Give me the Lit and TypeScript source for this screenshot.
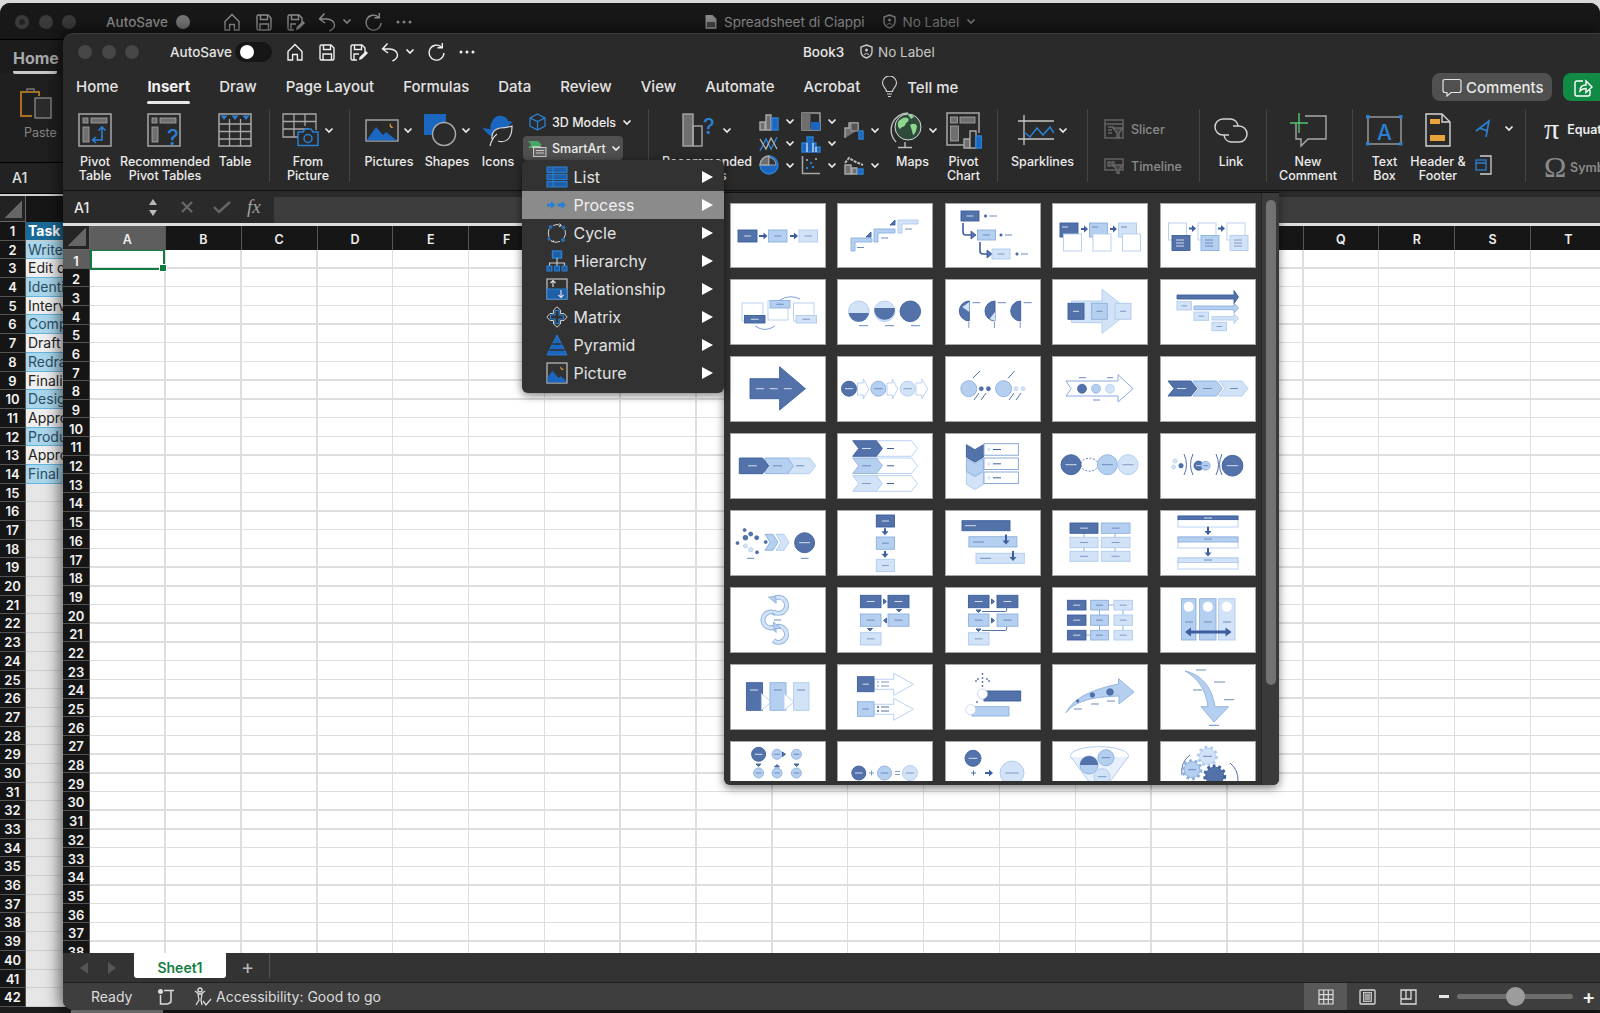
import { LitElement, html, css, svg, nothing } from 'lit';
import { customElement } from 'lit/decorators.js';

// ---------- small svg helpers ----------
const ic = (w: number, h: number, body: unknown) =>
  html`<svg class="ic" width=${w} height=${h} viewBox="0 0 ${w} ${h}" fill="none" stroke="currentColor" stroke-width="1.4">${body}</svg>`;

const chev = () => html`<svg class="chev" width="10" height="7" viewBox="0 0 10 7" fill="none" stroke="currentColor" stroke-width="1.7"><path d="M1.5 1.5 5 5l3.5-3.5"/></svg>`;

const BLUE = '#2a80d2';
const BLUE2 = '#1a66c0';
const GR = '#a8a8a8';
const GF = '#6f6f6f';

// ---------- title bar icons ----------
const home = ic(20, 20, svg`<path d="M3 9.5 10 2.5l7 7V18h-4.6v-5.5H7.6V18H3z"/>`);
const save = ic(20, 20, svg`<path d="M3 4.5Q3 3 4.5 3H14l3 3v10.5q0 1.5-1.5 1.5h-11Q3 18 3 16.5z"/><path d="M6.5 3v4.5h7V3M6 18v-6h8.500v6"/>`);
const saveAs = ic(20, 20, svg`<path d="M3 4.5Q3 3 4.5 3H14l3 3v5M9 18H4.5Q3 18 3 16.5V4.5"/><path d="M6.5 3v4.5h7V3M6 18v-6h5"/><path d="m11 18 .6-3L18 9l2 2-6 6z" fill="currentColor" stroke="none"/>`);
const undo = ic(20, 20, svg`<path d="M7.5 1.5 2.5 7l5.5 4M3 7h6.5c5 0 8 3 8 6 0 2.5-2 4.5-5 6"/>`);
const redo = ic(20, 20, svg`<path d="M15.5 5A7.5 7.5 0 1 0 18 11"/><path d="M16.3 1v4.8h-4.8"/>`);
const more = ic(20, 20, svg`<g fill="currentColor" stroke="none"><circle cx="4" cy="10" r="1.5"/><circle cx="10" cy="10" r="1.5"/><circle cx="16" cy="10" r="1.5"/></g>`);
const shield = ic(13, 15, svg`<path d="M6.5 1 12 3v4.5C12 11 9.5 13 6.5 14 3.5 13 1 11 1 7.5V3z"/><circle cx="6.5" cy="6" r="1.5" fill="currentColor" stroke="none"/><path d="M4 10.5q2.5-2 5 0" stroke-width="1"/>`);
const sheetDoc = ic(14, 16, svg`<path d="M1.5 1h7L12.5 5v10h-11z" fill="#8a8a8a" stroke="none"/><path d="M3 8h8v5H3z" fill="#444" stroke="none"/>`);

// ---------- ribbon icons ----------
const pivotBase = svg`<rect x="1" y="1" width="32" height="32" stroke=${GR} stroke-width="1.5"/><rect x="5" y="5" width="5" height="5" fill=${GF} stroke=${GR} stroke-width=".8"/><rect x="13" y="5" width="16" height="5" fill=${GF} stroke=${GR} stroke-width=".8"/><rect x="5" y="14" width="6" height="15" fill=${GF} stroke=${GR} stroke-width=".8"/>`;
const pivotTable = ic(34, 34, svg`${pivotBase}<path d="M15 27h9V14M20.5 17.5 24 14l3.5 3.5M18 24l-3.5 3 3.5 3" stroke=${BLUE} stroke-width="1.6"/>`);
const recPivot = ic(36, 34, svg`${pivotBase}<text x="20" y="32" font-family="Inter,sans-serif" font-size="22" fill=${BLUE} stroke="none">?</text>`);
const tableIc = ic(34, 34, svg`<rect x="1" y="1" width="32" height="32" stroke=${GR} stroke-width="1.5"/><path d="M1 11h32M1 18.5h32M1 26h32M11.5 6v27M22.5 6v27" stroke=${GR} stroke-width="1.3"/><path d="M2.5 2.5h7L6 7zM13.5 2.5h7L17 7zM24.5 2.5h7L28 7z" fill=${BLUE} stroke="none"/>`);
const fromPic = ic(38, 34, svg`<path d="M20 24H1V1h33v16M1 8.5h33M1 16h26M12 1v23M23 1v12" stroke=${GR} stroke-width="1.3"/><path d="M16 32.5V19h5l2-3h6l2 3h5v13.5z" fill="#2a2a2a" stroke=${BLUE} stroke-width="1.5"/><circle cx="26" cy="25.5" r="4" stroke=${BLUE} stroke-width="1.5"/>`);
const pictures = ic(34, 23, svg`<rect x="1" y="1" width="32" height="21" stroke=${GR} stroke-width="1.4"/><path d="M1.5 21.5 11 8l7 8 3-3 11 8.5z" fill=${BLUE2} stroke="none"/><path d="M25.5 4a3 3 0 0 0 1 5 3 3 0 0 0 2-1q-3 0-3-4z" fill="#e8a33d" stroke="none"/>`);
const shapes = ic(34, 34, svg`<rect x="1" y="1" width="22" height="21" fill=${BLUE2} stroke="none"/><circle cx="21" cy="21" r="11.5" fill="#2a2a2a" stroke=${GR} stroke-width="1.5"/>`);
const iconsIc = ic(34, 34, svg`<path d="M1 14q3 2 9 2-2-3 2-9 3-5 9-4 5 1 6 5l5 1-4 3v4q0 8-8 8-11 1-15-5-3-3-4-5z" fill=${BLUE2} stroke="none"/><path d="M9 33q2-8 7-12M11 26q-1-9 8-11 6 0 12-2 0 8-3 12-4 5-11 3" fill="#2a2a2a" stroke="#d8d8d8" stroke-width="1.2"/>`);
const cube = ic(17, 18, svg`<path d="M8.5 1 16 4.8v8.400L8.5 17 1 13.200V4.800zM1 4.800l7.5 3.700L16 4.800M8.5 8.500V17" stroke=${BLUE} stroke-width="1.3"/>`);
const smart = ic(20, 17, svg`<path d="M1 1h10l3.500 3.500L11 8H1l3-3.500z" fill="#4aa564" stroke="none"/><path d="M5 7h9" stroke="#b9e2c2"/><rect x="6.500" y="7.500" width="12.500" height="9" fill="#666" stroke="#c9c9c9" stroke-width="1"/><path d="M9 10.500h8M9 13h8" stroke="#ddd" stroke-width=".8"/>`);
const recChart = ic(36, 34, svg`<rect x="1" y="1" width="10" height="32" fill=${GF} stroke=${GR} stroke-width="1.4"/><rect x="11" y="13" width="9" height="20" stroke=${GR} stroke-width="1.4"/><text x="21" y="21" font-family="Inter,sans-serif" font-size="22" fill=${BLUE} stroke="none">?</text>`);
const cBars = ic(20, 18, svg`<path d="M1 17V9h5v8zM7 17V2h5v15z" stroke=${GR} fill=${GF}/><path d="M13 17V5h6v12z" fill=${BLUE2} stroke=${BLUE}/>`);
const cStack = ic(20, 19, svg`<rect x="1" y="1" width="18" height="17" stroke=${GR}/><rect x="1" y="1" width="8.500" height="17" fill=${GF} stroke="none"/><rect x="10" y="10" width="9" height="8" fill=${BLUE2} stroke="none"/>`);
const cLine = ic(20, 18, svg`<path d="M1 16 7 4l5 10 6-12" stroke=${BLUE} stroke-width="1.5"/><path d="M1 4l6 10 5-11 6 11" stroke="#b0b0b0"/>`);
const cColumn = ic(20, 18, svg`<path d="M1 17V8h5V2h6v6h3v4h4v5z" fill=${BLUE2} stroke=${BLUE}/><path d="M6 8v9M12 8v9M15 12v5" stroke="#cde"/>`);
const cPie = ic(20, 20, svg`<circle cx="10" cy="10" r="9" fill=${BLUE2} stroke=${BLUE}/><path d="M10 10V1a9 9 0 0 0-9 9z" fill=${GF} stroke=${GR}/><path d="M10 2.500a7.500 7.500 0 0 1 7 7.500h-7z" fill="#333" stroke=${GR} stroke-width=".9"/>`);
const cScatter = ic(20, 20, svg`<path d="M1.500 1v17.500H19" stroke=${GR} stroke-width="1.5"/><g fill=${BLUE} stroke="none"><circle cx="6" cy="13" r="1.2"/><circle cx="10" cy="8" r="1.2"/><circle cx="12" cy="12" r="1.2"/></g><g fill="#bbb" stroke="none"><circle cx="6" cy="5" r="1"/><circle cx="15" cy="4" r="1"/></g>`);
const cWaterfall = ic(20, 20, svg`<path d="M1 18V8h4V3h9v7" stroke=${GR} fill=${GF}/><path d="M7 3h7v8H7z" fill="#555" stroke=${GR} stroke-width=".9"/><path d="M15 11h4v8h-4z" fill=${BLUE2} stroke=${BLUE}/>`);
const cHier = ic(20, 20, svg`<path d="M1 8 5 3l7 4 7 3" stroke="#bbb" stroke-width="2" stroke-dasharray="3 1"/><path d="M1 19V10h6v9zM8 19v-6h5v6z" fill=${GF} stroke=${GR}/><path d="M14 14h5v5h-5z" fill=${BLUE2} stroke=${BLUE}/>`);
const globe = ic(36, 38, svg`<path d="M8 31A17 17 0 0 1 20 2" stroke="#bdbdbd" stroke-width="1.4"/><circle cx="20" cy="16" r="13" fill="#2d4a3a" stroke="#d9d9d9" stroke-width="1"/><path d="M10 11q5-6 10-4 2 3-2 5-1 4-4 4l-2 2q-3-2-2-7zM22 14q5-3 7 1-1 8-4 9-1-5-3-10zM20 4q4-1 6 2l-3 2z" fill="#8fd68f" stroke="none"/><path d="M17 31v5M10 36.500h14" stroke="#bdbdbd"/>`);
const pivotChart = ic(36, 37, svg`<path d="M20 33H1V1h32v20" stroke=${GR} stroke-width="1.5"/><rect x="4.500" y="5" width="7" height="6" fill=${GF} stroke=${GR} stroke-width=".8"/><rect x="14" y="5" width="15" height="6" fill=${GF} stroke=${GR} stroke-width=".8"/><rect x="4.500" y="14" width="8" height="15" fill=${GF} stroke=${GR} stroke-width=".8"/><path d="M18 36V27h6v9z" fill=${GF} stroke=${GR}/><path d="M24 36V19h6v17z" fill="#2a2a2a" stroke=${GR}/><path d="M30 36V24h5.500v12z" fill=${BLUE2} stroke=${BLUE}/>`);
const spark = ic(36, 30, svg`<path d="M0 6h36M0 24h36M6 0v30" stroke="#c9c9c9" stroke-width="1.3"/><path d="M6 17l6 5 7-9 6 7 7-8 4 6" stroke=${BLUE} stroke-width="1.5"/>`);
const slicer = ic(20, 20, svg`<g stroke="#666"><rect x="1" y="1" width="18" height="18"/><path d="M1 5h18"/><path d="M4 8h6M4 11h4M4 14h4"/><path d="M9 9h10l-4 5v5l-2-1v-4z" fill="#444"/></g>`);
const timeline = ic(20, 16, svg`<g stroke="#666"><rect x="1" y="1" width="18" height="11"/><path d="M4 4h2v4H4zM8 4h2v4H8z"/><path d="M9 7h10l-4 5v4l-2-1v-3z" fill="#444"/></g>`);
const link = ic(34, 25, svg`<g stroke="#d2d2d2" stroke-width="1.5"><path d="M15 17H9a8 8 0 0 1 0-16h8a8 8 0 0 1 7 7"/><path d="M19 8h6a8 8 0 0 1 0 16h-8a8 8 0 0 1-7-7"/></g>`);
const newComment = ic(37, 35, svg`<path d="M6 10v16h5v7l7-7h18V3H15" stroke=${GR} stroke-width="1.4"/><path d="M9 0v20M0 10h18" stroke="#54c76d" stroke-width="1.4"/>`);
const textBox = ic(37, 31, svg`<rect x="2" y="2" width="33" height="27" stroke="#a8a8a8" stroke-width="1.3"/><text x="18.500" y="25" font-family="Inter,sans-serif" font-size="21" text-anchor="middle" fill=${BLUE} stroke="none">A</text><g fill=${BLUE} stroke="none"><rect x="0" y="0" width="3.500" height="3.500"/><rect x="33" y="0" width="3.500" height="3.500"/><rect x="0" y="27" width="3.500" height="3.500"/><rect x="33" y="27" width="3.500" height="3.500"/></g>`);
const headFoot = ic(26, 34, svg`<path d="M1 1h16l8 8v24H1z" stroke="#d5d5d5" stroke-width="1.4"/><path d="M17 1v8h8" stroke="#d5d5d5"/><rect x="5" y="6" width="10" height="5" fill="#e8a33d" stroke="none"/><rect x="5" y="22" width="15" height="6" fill="#e8a33d" stroke="none"/>`);
const wordArt = ic(17, 19, svg`<path d="M1 12 14 2 11 18M4 9l9 3" stroke=${BLUE} stroke-width="1.7"/>`);
const objBox = ic(17, 20, svg`<path d="M5 1h11v18H5" stroke="#d0d0d0" stroke-width="1.3"/><rect x="1" y="5" width="10" height="10" fill="#2a2a2a" stroke=${BLUE} stroke-width="1.3"/><path d="M1 8h10" stroke=${BLUE}/>`);

// ---------- menu icons ----------
const mFrame = (b: unknown) => ic(22, 22, b);
const M_ICONS = {
  List: mFrame(svg`<g stroke=${BLUE} stroke-width="1.1"><rect x="1" y="1" width="20" height="5.300" fill="#1f5fa8"/><rect x="1" y="8.300" width="20" height="5.300" fill="#1f5fa8"/><rect x="1" y="15.600" width="20" height="5.300" fill="#1f5fa8"/><path d="M7 1v20"/></g>`),
  Process: mFrame(svg`<g fill=${BLUE} stroke="none"><path d="M1 9.500h4V7l4.500 4L5 15v-2.500H1z"/><path d="M11.500 9.500h4V7l4.500 4-4.500 4v-2.500h-4z"/></g>`),
  Cycle: mFrame(svg`<g stroke="#d0d0d0" stroke-width="1"><path d="M7 3.500Q11 1.500 15 3.500M19 8q1.500 4-1 8M14 19.500q-4 1.500-8 0M3 15q-1.500-4 0-8"/><path d="M13.500 1.500 15.500 3.500 13 5M5 18l1 1.800 2-1.500"/></g><g fill="#1f5fa8" stroke=${BLUE} stroke-width=".9"><circle cx="4.500" cy="5" r="1.500"/><circle cx="17.500" cy="5.500" r="1.500"/><circle cx="17" cy="18" r="1.500"/><circle cx="3" cy="17" r="1.200"/></g>`),
  Hierarchy: mFrame(svg`<rect x="6.500" y="1" width="9" height="7" fill="#1f5fa8" stroke=${BLUE}/><path d="M11 8v5M3.500 16v-3h15v3M11 13v3" stroke="#cfcfcf" stroke-width="1.1"/><g fill="#1f5fa8" stroke=${BLUE} stroke-width="1"><rect x="1" y="16" width="5" height="5"/><rect x="8.500" y="16" width="5" height="5"/><rect x="16" y="16" width="5" height="5"/></g>`),
  Relationship: mFrame(svg`<rect x="1" y="1" width="20" height="20" stroke="#cfcfcf" stroke-width="1.1"/><rect x="1" y="11" width="20" height="10" fill="#1f5fa8" stroke=${BLUE} stroke-width="1"/><path d="M7 9V3M4.500 5 7 2.500 9.500 5M15 12v7M12.500 17l2.500 2.500 2.500-2.500" stroke="#e6e6e6" stroke-width="1.1"/>`),
  Matrix: mFrame(svg`<path d="M11 .8 14.500 4v3.500H18l3.200 3.500L18 14.500h-3.500V18L11 21.200 7.500 18v-3.500H4L.8 11 4 7.500h3.500V4z" stroke="#cfcfcf" stroke-width="1"/><path d="M9 4.500h4V9h4.500v4H13v4.500H9V13H4.500V9H9z" stroke=${BLUE} stroke-width="1.2"/>`),
  Pyramid: mFrame(svg`<path d="M11 1 21 21H1z" fill=${BLUE2} stroke=${BLUE} stroke-width=".9"/><path d="M6.500 10h9M3.500 16h15" stroke="#2f2f2f" stroke-width="1.5"/>`),
  Picture: mFrame(svg`<rect x="1" y="1" width="20" height="20" stroke="#cfcfcf" stroke-width="1.1"/><path d="M1.500 20.500V15l5-6 6 7 2-2 6 5v1.500z" fill=${BLUE2} stroke="none"/><path d="M15 4a2.500 2.500 0 0 0 1 4 2.500 2.500 0 0 0 2-1q-3 0-3-3z" fill="#e8a33d" stroke="none"/>`),
} as Record<string, unknown>;

// ---------- gallery thumbnails ----------
const K: Record<string, [string, string, string]> = {
  d: ['#5372a9', '#3c5e9f', '#d6dfef'],
  m: ['#b4cff0', '#8db0de', '#6d8bbd'],
  l: ['#d3e3f7', '#afcbef', '#7f9ac6'],
  w: ['#ffffff', '#b3cdef', '#7f9ac6'],
  v: ['#ffffff', '#7fa0d6', '#3c5e9f'],
};
const SW = 0.9;
const r = (x: number, y: number, w: number, h: number, k: string) =>
  svg`<rect x=${x} y=${y} width=${w} height=${h} fill=${K[k][0]} stroke=${K[k][1]} stroke-width=${SW}/>`;
const c = (cx: number, cy: number, rad: number, k: string) =>
  svg`<circle cx=${cx} cy=${cy} r=${rad} fill=${K[k][0]} stroke=${K[k][1]} stroke-width=${SW}/>`;
const p = (d: string, k: string) => svg`<path d=${d} fill=${K[k][0]} stroke=${K[k][1]} stroke-width=${SW}/>`;
const ln = (x1: number, x2: number, y: number, k = 'm') =>
  svg`<path d="M${x1} ${y}H${x2}" stroke=${K[k][2]} stroke-width="1"/>`;
const st = (d: string, col = '#3c5e9f', w = 1) => svg`<path d=${d} stroke=${col} stroke-width=${w} fill="none"/>`;
const rd = (x: number, y: number, w: number, h: number, k: string) => {
  const l = Math.min(w * 0.38, 8);
  return svg`${r(x, y, w, h, k)}${ln(x + w / 2 - l / 2, x + w / 2 + l / 2, y + h / 2, k)}`;
};
const cd = (cx: number, cy: number, rad: number, k: string) =>
  svg`${c(cx, cy, rad, k)}${ln(cx - rad * 0.55, cx + rad * 0.55, cy, k)}`;
const ar = (x1: number, x2: number, y: number) =>
  svg`<path d="M${x1} ${y - 1}H${x2 - 4}V${y - 3.5}L${x2} ${y}L${x2 - 4} ${y + 3.5}V${y + 1}H${x1}z" fill="#3c5e9f"/>`;
const ad = (x: number, y1: number, y2: number) =>
  svg`<path d="M${x - 1} ${y1}V${y2 - 4}H${x - 3.5}L${x} ${y2}L${x + 3.5} ${y2 - 4}H${x + 1}V${y1}z" fill="#3c5e9f"/>`;
const chv = (x: number, y: number, w: number, h: number, n: number, k: string) =>
  p(`M${x} ${y}H${x + w - n}L${x + w} ${y + h / 2}L${x + w - n} ${y + h}H${x}L${x + n} ${y + h / 2}z`, k);
const pen = (x: number, y: number, w: number, h: number, n: number, k: string) =>
  p(`M${x} ${y}H${x + w - n}L${x + w} ${y + h / 2}L${x + w - n} ${y + h}H${x}z`, k);
const house = (x: number, y: number, w: number, h: number, body: number, k: string) =>
  p(`M${x} ${y + body}H${x + w * 0.5}V${y}L${x + w} ${y + h / 2}L${x + w * 0.5} ${y + h}V${y + h - body}H${x}z`, k);
const dot = (x: number, y: number, rad: number, k = 'd') =>
  svg`<circle cx=${x} cy=${y} r=${rad} fill=${k === 'w' ? '#fff' : K[k][0]} stroke=${K[k][1]} stroke-width=".7"/>`;
const gear = (x: number, y: number, rad: number, k: string) =>
  svg`<circle cx=${x} cy=${y} r=${rad + 1} fill="none" stroke=${K[k][1]} stroke-width="3" stroke-dasharray="2.8 2.8"/>${c(x, y, rad, k)}`;
// round arrow: ring with a gap and a head at one end of the gap
const ring = (x: number, y: number, rot: number) =>
  svg`<g transform="rotate(${rot} ${x} ${y})"><circle cx=${x} cy=${y} r="8" fill="none" stroke="#8db0de" stroke-width="5" stroke-dasharray="36 14.3"/><circle cx=${x} cy=${y} r="8" fill="none" stroke="#d3e3f7" stroke-width="3.2" stroke-dasharray="36 14.3"/><path d="M${x} ${y + 3}v10l-5-5z" fill="#b4cff0" stroke="#8db0de" stroke-width=".8" transform="rotate(-102 ${x} ${y})"/></g>`;

const THUMBS = [
  // row 1
  svg`${rd(8, 27, 19, 12, 'd')}${ar(29, 37.5, 33)}${rd(38.5, 27, 18.5, 12, 'm')}${ar(60, 68, 33)}${rd(69, 27, 18.5, 12, 'l')}`,
  svg`${p('M14 35h21v4H18v9h-4z', 'm')}${p('M37 26h21v4H41v9h-4z', 'm')}${p('M61 17h20v4H65v9h-4z', 'l')}${p('M29 34l5-5v5z', 'd')}${p('M53 22l5-5v5z', 'd')}${ln(20, 27, 44.5)}${ln(44, 51, 35)}${ln(68, 75, 26)}`,
  svg`${rd(16, 8, 18, 10, 'd')}${dot(40.5, 13, 1.2)}${ln(44.5, 52, 13)}${st('M18 20v9q0 3 3 3h5', '#3c5e9f', 1.6)}${p('M26 28l5 4-5 4z', 'd')}${rd(32.5, 27, 18, 10, 'm')}${dot(56, 32, 1.2)}${ln(60, 67, 32)}${st('M35 39v9q0 3 3 3h4', '#3c5e9f', 1.6)}${p('M42 47l5 4-5 4z', 'd')}${rd(47, 46, 18, 10, 'l')}${dot(72, 51, 1.2)}${ln(76, 83, 51)}`,
  svg`${r(8, 20, 18, 14, 'd')}${ln(10, 16, 24, 'd')}${r(11.5, 31, 18, 17, 'w')}${ar(29, 36, 26)}${r(37.5, 20, 18, 14, 'm')}${ln(40, 46, 24)}${r(41, 31, 18, 17, 'w')}${ar(58, 65, 26)}${r(66.5, 20, 18, 14, 'l')}${ln(69, 75, 24)}${r(70.5, 31, 18, 17, 'w')}`,
  svg`${r(8.5, 20, 18, 17, 'w')}${r(12, 32.5, 18, 15, 'd')}${st('M16 37h8M16 40h8M16 43h8', '#d6dfef')}${ar(29, 36, 25.5)}${r(38, 20, 18, 17, 'w')}${r(41, 32.5, 18, 15, 'm')}${st('M45 37h8M45 40h8M45 43h8', '#6d8bbd')}${ar(58, 65, 25.5)}${r(67, 20, 18, 17, 'w')}${r(70, 32.5, 18, 15, 'l')}${st('M74 37h8M74 40h8M74 43h8', '#7f9ac6')}`,
  // row 2
  svg`${r(12, 24, 21, 18, 'w')}${rd(14.5, 36.5, 20.5, 7.5, 'd')}${r(38, 22, 20, 19, 'w')}${rd(40, 21.5, 20, 7.5, 'm')}${r(63.5, 24, 20.5, 18, 'w')}${rd(66, 36.5, 20.5, 7.5, 'l')}${st('M50 21q10-6 20-1', '#7fa0d6')}${st('M25 47q10 7 20 0', '#7fa0d6')}`,
  svg`${c(21.8, 32.3, 10.3, 'l')}<path d="M11.6 34h20.400a10.300 10.300 0 0 1-20.400 0z" fill="#5372a9"/>${c(47.6, 32.3, 10.3, 'l')}<path d="M37.4 29h20.400a10.300 10.300 0 1 1-20.400 0z" fill="#5372a9"/>${c(73.3, 32.3, 10.3, 'd')}${ln(22, 31, 46.7)}${ln(48, 57, 46.7)}${ln(74, 83, 46.7)}`,
  svg`${[24.3, 50, 75.7].map((x, i) => svg`<path d="M${x} 22a10 10 0 0 0 0 20z" fill="#5372a9" stroke="#3c5e9f" stroke-width=".9"/>${i < 2 ? svg`<path d="M${x} ${i ? 33 : 23}${i ? 'v9l-5.5-2z' : 'v10l-7-5z'}" fill="#d3e3f7"/>` : nothing}${ln(x + 3, x + 11, 23.7)}${st(`M${x - 0.5} 43v6`, '#7f9ac6')}`)}`,
  svg`${p('M19.6 22H50V10.300L78.200 32.300 50 54.300V43.700H19.600z', 'l')}${rd(16, 24.3, 16, 16, 'd')}${rd(39.6, 24.3, 15.7, 16, 'm')}${rd(63, 24.3, 16, 16, 'l')}`,
  svg`${p('M17 16H74V11.500L78.500 18 74 24.500V20H17z', 'd')}${rd(17, 22.7, 14.4, 8.3, 'l')}${p('M34 27H74V24L78.500 29 74 34V30.700H34z', 'm')}${rd(34, 33, 14.6, 8.3, 'l')}${p('M52 37.700H74V34.500L78.500 39.500 74 44.500V41H52z', 'l')}${rd(52, 43.3, 14.5, 8.4, 'l')}`,
  // row 3
  svg`${p('M20 22.700H49.600V10.700L75.400 32.700 49.600 54V42.700H20z', 'd')}${ln(26, 34, 32.7, 'd')}${ln(39.6, 47.6, 32.7, 'd')}${ln(54, 61.7, 32.7, 'd')}`,
  svg`${house(20.5, 23, 11.5, 20, 4, 'w')}${cd(12, 32.7, 7.5, 'd')}${house(50, 23, 10.7, 20, 4, 'w')}${cd(41.4, 32.7, 7.5, 'm')}${house(79, 23, 11.7, 20, 4, 'w')}${cd(70.7, 32.7, 7.5, 'l')}`,
  svg`${c(23.8, 32.7, 8, 'm')}${dot(36.3, 32.7, 2)}${dot(43.4, 32.7, 2)}${c(58.6, 32.7, 8, 'm')}${dot(71, 32.7, 2, 'l')}${dot(78, 32.7, 2, 'l')}${st('M28 22l7-7M63 22.300l6.600-7.300', '#5372a9')}${st('M29 44l5-7M36 44l5-7M64 44l5-7M71 44l5-7', '#5372a9')}`,
  svg`${p('M14 25H66V18.700L81 32.700 66 46V40H14L19 32.700z', 'v')}${dot(30, 32.7, 4.5)}${dot(44, 32.7, 4.5, 'm')}${dot(58, 32.7, 4.5, 'l')}${ln(27, 34, 21.7)}${ln(55, 61, 21.7)}${ln(41, 48, 44)}`,
  svg`${chv(59, 25, 29, 15, 6, 'l')}${ln(70, 78, 32.5)}${chv(33, 25, 29.5, 15, 6, 'm')}${ln(43, 52, 32.5)}${chv(8, 25, 29, 15, 6, 'd')}${ln(17, 26, 32.5, 'd')}`,
  // row 4
  svg`${pen(57, 25, 28.7, 15.7, 6, 'l')}${ln(66, 74, 32.8)}${pen(35, 25, 28.6, 15.7, 6, 'm')}${ln(43, 52, 32.8)}${pen(9.3, 25, 29.3, 15.7, 6, 'd')}${ln(18, 27, 32.8, 'd')}`,
  svg`${[[7.7, 'd'], [25, 'm'], [42.7, 'l']].map(([y, k]) => svg`${pen(38.6, y as number, 41.8, 15.6, 6, 'w')}${chv(15.7, y as number, 29.7, 15.6, 6, k as string)}${ln(25, 34, (y as number) + 7.8, k as string)}${ln(50, 57, (y as number) + 7.8, 'v')}`)}`,
  svg`${[[39, 'l', 39], [25.7, 'm', 25], [11.7, 'd', 10.7]].map(([y, k, by]) => svg`<path d="M21.4 ${y}l8.500 5 8.500-5v12.500l-8.500 5-8.500-5z" fill=${K[k as string][0]} stroke=${K[k as string][1]} stroke-width=".9"/>${r(39, by as number, 34.4, 11.5, 'v')}${dot(44, (by as number) + 5.8, 1.3, 'w')}${ln(48, 56, (by as number) + 5.8, 'v')}`)}`,
  svg`${cd(19, 31.7, 10, 'd')}<ellipse cx="37.5" cy="31.7" rx="8.5" ry="6.5" fill="none" stroke="#5372a9" stroke-width=".9" stroke-dasharray="2 1.5"/>${cd(55.4, 31.7, 10, 'm')}${cd(76, 31.7, 10, 'l')}`,
  svg`${dot(15, 28, 2, 'l')}${dot(21, 32.7, 2.2)}${dot(13.6, 34, 2, 'l')}${st('M24 21q5 11 0 21M33 21q-5 11 0 21M56 21q5 11 0 21M62 21q-5 11 0 21', '#5372a9')}${cd(38.6, 32.7, 4.6, 'd')}${cd(45.7, 32.7, 4.4, 'm')}${cd(72.5, 32.7, 10.4, 'd')}`,
  // row 5
  svg`${[[14.6, 20, 1.5, 'd'], [15.4, 27.7, 2.4, 'd'], [20.7, 24, 2, 'd'], [26.7, 27.7, 2, 'd'], [7.5, 33, 1.5, 'd'], [15.4, 36, 2, 'l'], [20.7, 39.7, 2.2, 'l'], [27, 42.3, 1.5, 'd'], [35.7, 32, 1.5, 'd']].map(([x, y, s, k]) => dot(x as number, y as number, s as number, k as string))}${chv(46, 24.3, 13, 16, 5, 'l')}${chv(35, 24.3, 13, 16, 5, 'm')}${cd(74.6, 32.7, 10, 'd')}${ln(17, 24.3, 48.3)}${ln(70.7, 78.5, 48.3)}`,
  svg`${rd(39.3, 5, 18.2, 12, 'd')}${ad(48, 18.3, 25.3)}${rd(39.3, 27, 18.2, 12.3, 'm')}${ad(48, 41, 47.7)}${rd(39.3, 49.3, 18.2, 12.3, 'l')}`,
  svg`${r(17, 10.7, 48, 10, 'd')}${ln(20, 31, 15.7, 'd')}${r(23.9, 26.7, 48, 10.3, 'm')}${ln(28, 39, 32)}${ad(61, 24.5, 34.5)}${r(31, 43.3, 48.3, 10, 'l')}${ln(35, 46, 48.3)}${ad(68, 41, 51)}`,
  svg`${st('M32 20v28M63 20v28', '#8db0de')}${rd(18, 13, 28, 10.3, 'd')}${rd(49.3, 13, 28.7, 10.3, 'm')}${rd(18, 27.3, 28, 10.4, 'l')}${rd(49.3, 27.3, 28.7, 10.4, 'l')}${rd(18, 41.3, 28, 10, 'l')}${rd(49.3, 41.3, 28.7, 10, 'l')}`,
  svg`${r(18, 6, 60, 11, 'w')}${r(18, 6, 60, 3.6, 'd')}${ad(48, 16.7, 25)}${r(18, 27, 60, 11, 'w')}${r(18, 27, 60, 5, 'm')}${ad(48, 38, 46.5)}${r(18, 48, 60, 11, 'w')}${r(18, 48, 60, 4.5, 'l')}${ln(44, 52, 8, 'd')}${ln(44, 52, 29)}${ln(44, 52, 50)}`,
  // row 6
  svg`${ring(48.6, 47.3, 231)}${ring(41, 33, 51)}${ring(48.6, 18.3, 231)}${ln(44, 51, 33)}`,
  svg`${rd(23.4, 8.3, 20.6, 12.4, 'd')}${p('M46.500 12l3 2.500-3 2.500z', 'd')}${rd(51, 8.3, 21, 12.4, 'd')}${p('M59.500 22.500h5l-2.500 2.500z', 'd')}${rd(23.4, 27, 20.6, 12.3, 'm')}${p('M49.500 31l-3 2.500 3 2.500z', 'd')}${rd(51, 27, 21, 12.3, 'm')}${p('M30.500 41.500h5l-2.500 2.500z', 'd')}${rd(23.4, 45.7, 20.6, 12.3, 'l')}`,
  svg`${rd(23.4, 8.3, 20.6, 12.4, 'd')}${p('M46.500 12l3 2.500-3 2.500z', 'd')}${rd(52, 8.3, 20.9, 12.4, 'd')}${st('M61.7 21v2q0 1.500-1.500 1.500H37', '#5372a9')}${p('M31 23h5l-2.500 2.500z', 'd')}${rd(23.4, 27, 20.6, 12.3, 'm')}${p('M46.500 31l3 2.500-3 2.500z', 'd')}${rd(52, 27, 20.9, 12.3, 'm')}${st('M61.7 40v2q0 1.500-1.500 1.500H37', '#5372a9')}${p('M31 42h5l-2.500 2.500z', 'd')}${rd(23.4, 45.7, 20.6, 12.3, 'l')}`,
  svg`${st('M34 48h5M56 18h7M47.500 23v5M71 23v5M47.500 38v5M71 38v5', '#8db0de')}${rd(15.4, 13.3, 18.6, 9.7, 'd')}${rd(15.4, 28, 18.6, 10.3, 'd')}${rd(15.4, 43.3, 18.6, 9.7, 'd')}${rd(38.6, 13.3, 17.8, 9.7, 'm')}${rd(38.6, 28, 17.8, 10.3, 'm')}${rd(38.6, 43.3, 17.8, 9.7, 'm')}${rd(62, 13.3, 18.4, 9.7, 'l')}${rd(62, 28, 18.4, 10.3, 'l')}${rd(62, 43.3, 18.4, 9.7, 'l')}`,
  svg`${r(21.4, 11.7, 14.6, 41.3, 'm')}${r(39.6, 11.7, 16.4, 41.3, 'm')}${r(58.6, 11.7, 16.4, 41.3, 'l')}<g fill="#fff"><circle cx="28.7" cy="19.7" r="5"/><circle cx="47.8" cy="19.7" r="5"/><circle cx="66.8" cy="19.7" r="5"/></g>${ln(25, 33, 35)}${ln(44, 52, 35)}${ln(63, 71, 35)}<path d="M25 45l6-4.500v3h34.500v-3l6 4.500-6 4.500v-3H31v3z" fill="#3c5e9f"/>`,
  // row 7
  svg`${r(16.4, 18.7, 16.1, 27.6, 'd')}${ln(20, 28, 26, 'd')}${p('M31.4 29.500 41.400 38 31.400 46.300z', 'w')}${r(40, 18.7, 16, 27.6, 'm')}${ln(44, 52, 26)}${p('M54 29.500 64 38 54 46.300z', 'w')}${r(63.6, 18.7, 15.4, 27.6, 'l')}${ln(67, 75, 26)}`,
  svg`${house(37, 9.3, 39.4, 22, 6, 'w')}${rd(20.4, 12.7, 16.6, 15, 'd')}${dot(41, 18, .7, 'm')}${dot(41, 22, .7, 'm')}${st('M44 18h8M44 22h8', '#7f9ac6')}${house(37, 34.3, 39.4, 22, 6, 'w')}${rd(20.4, 37.7, 16.6, 14.6, 'm')}${dot(41, 43, .7, 'd')}${dot(41, 47, .7, 'd')}${st('M44 43h8M44 47h8', '#5372a9')}`,
  svg`${r(39, 27, 36.7, 10, 'd')}${dot(37.5, 30, 5, 'w')}${r(27, 42.7, 37, 9.3, 'm')}${dot(25.7, 45.7, 5, 'w')}<g fill="#5372a9"><circle cx="37.5" cy="10" r=".9"/><circle cx="37.5" cy="14" r=".9"/><circle cx="37.5" cy="18" r=".9"/><circle cx="37.5" cy="22" r=".9"/><circle cx="33" cy="15" r=".9"/><circle cx="42" cy="15" r=".9"/><circle cx="31" cy="17" r=".9"/><circle cx="44" cy="17" r=".9"/><circle cx="32" cy="38" r=".9"/></g>`,
  svg`${p('M14 48.700C22 33 42 25 66.500 20V14.700L82 28 67 40V32C48 33 26 34 14 48.700z', 'm')}${dot(58, 28, 3.3)}${dot(40.4, 31, 2.2)}${dot(25.7, 37, 1.2)}${ln(22, 30, 45)}${ln(39, 47, 40)}${ln(55, 63, 37)}`,
  svg`${p('M25 7C40 10 52 22 55 42.700H68.600L54 58 41 42.700H48C46 26 38 14 25 7z', 'm')}${ln(36, 46, 6)}${ln(54, 65, 18)}${ln(33, 42, 26)}${ln(64, 74, 35.7)}${ln(49, 59, 61.3)}`,
  // row 8, cut off by the panel
  svg`${cd(28.6, 13.3, 7, 'd')}${cd(47, 13.3, 5, 'm')}${p('M52.500 11l3 2.300-3 2.300z', 'd')}${cd(66.4, 13.3, 5, 'm')}${p('M26 23h5l-2.500 2.500z', 'd')}${p('M44.500 26l2.500-2.500 2.500 2.500z', 'd')}${p('M64 23h5l-2.500 2.500z', 'd')}${cd(28.6, 32, 5, 'm')}${cd(47, 32, 5, 'm')}${cd(66.4, 32, 5, 'm')}`,
  svg`${cd(21.8, 32, 7, 'd')}${st('M32 32h5M34.500 29.500v5', '#7f9ac6')}${cd(47.5, 32, 7, 'm')}${st('M58 30.500h5M58 33.500h5', '#7f9ac6')}${cd(73, 32, 7.5, 'l')}`,
  svg`${cd(28, 17.3, 8, 'd')}${st('M26 32h5M28.500 29.500v5', '#5372a9')}${ar(40, 48, 32)}${cd(67, 32, 12, 'l')}`,
  svg`<ellipse cx="47.5" cy="14.7" rx="29" ry="9" fill="#fff" stroke="#b3cdef"/><path d="M19 16 38 42h19l19-26" fill="#e8f0fb" stroke="#b3cdef"/>${cd(54, 16.7, 8, 'm')}${c(37, 24, 9, 'm')}<path d="M28 24a9 9 0 0 1 18 0z" fill="#5372a9"/>${cd(50, 35.7, 8, 'l')}`,
  svg`${st('M22 34a20 20 0 0 1 8-20M70 22a22 22 0 0 1 8 18', '#5372a9')}${gear(47.5, 15.3, 8, 'l')}${gear(32, 28.7, 8, 'm')}${gear(54.7, 35, 9, 'd')}${ln(43, 52, 15.3)}${ln(28, 36, 28.7)}`,
];

// ---------- static data ----------
const BACK_CELLS = ['Task', 'Write', 'Edit qu', 'Identi', 'Interv', 'Comp', 'Draft r', 'Redra', 'Finaliz', 'Desigi', 'Appro', 'Produ', 'Appro', 'Final a'];
const COLS = 'ABCDEFGHIJKLMNOPQRST'.split('');
const MENU = ['List', 'Process', 'Cycle', 'Hierarchy', 'Relationship', 'Matrix', 'Pyramid', 'Picture'];
const TABS = ['Home', 'Insert', 'Draw', 'Page Layout', 'Formulas', 'Data', 'Review', 'View', 'Automate', 'Acrobat'];

@customElement('app-root')
export class AppRoot extends LitElement {
  static styles = css`
    :host {
      display: block;
      position: relative;
      width: 1600px;
      height: 1013px;
      overflow: hidden;
      background: #d9d9d9;
      font-family: Inter, 'Noto Sans', sans-serif;
      color: #e8e8e8;
    }
    .ic, .chev { display: block; flex: none; }

    /* ===== windows on the desktop ===== */
    .win-back {
      position: absolute;
      left: 0;
      top: 3px;
      width: 1600px;
      height: 1010px;
      background: #1c1c1c;
      border-radius: 10px 10px 0 0;
      overflow: hidden;
      color: #8e8e8e;
      display: flex;
      flex-direction: column;
    }
    .shell { position: absolute; left: 63px; top: 33px; width: 1537px; height: 977px; }
    .win-front {
      height: 100%;
      background: #2a2a2a;
      border-radius: 10px 0 0 10px;
      overflow: hidden;
      box-shadow: 0 0 16px 3px rgba(0, 0, 0, 0.6);
      display: flex;
      flex-direction: column;
      border-top: 1px solid #3e3e3e;
      box-sizing: border-box;
    }

    /* ===== back window ===== */
    .b-title { height: 37px; flex: none; display: flex; align-items: center; padding-top: 1px; box-sizing: border-box; background: #181818; border-bottom: 1px solid #000; }
    .lights { display: flex; gap: 9.5px; }
    .light { width: 14px; height: 14px; border-radius: 50%; background: #474747; }
    .b-title .lights { margin-left: 15px; }
    .b-title .light { background: #3a3a3a; }
    .b-title .light:first-child { box-shadow: inset 0 0 0 4px #3a3a3a; background: #222; }
    .b-auto { margin-left: 30px; font-size: 13.5px; font-weight: 500; width: 63px; }
    .b-knob { width: 14px; height: 14px; border-radius: 50%; background: #777; margin-left: 7px; }
    .b-tools { display: flex; align-items: center; margin-left: 32px; width: 482px; gap: 11.5px; }
    .b-tools .chev { margin-left: -6px; margin-right: -1px; }
    .b-name { display: flex; align-items: center; gap: 6px; font-size: 13.5px; }
    .b-label { margin-left: 18px; display: flex; align-items: center; gap: 7px; font-size: 13.5px; color: #777; }
    .b-tab { margin: 8px 0 0 13px; font-size: 16px; font-weight: 700; color: #a8a8a8; width: 44px; height: 26px; flex: none; border-bottom: 3px solid #c8c8c8; box-sizing: border-box; border-radius: 0 0 2px 2px; line-height: 20px; }
    .b-ribbon { height: 89px; flex: none; padding: 13px 0 0 20px; box-sizing: border-box; background: #1f1f1f; border-bottom: 1px solid #000; }
    .b-paste { width: 34px; height: 32px; position: relative; }
    .b-paste-l { font-size: 12.5px; margin: 6px 0 0 4px; color: #858585; }
    .b-formula { height: 30px; flex: none; background: #222; font-size: 14px; font-weight: 500; color: #e0e0e0; line-height: 29px; padding-left: 12px; box-sizing: border-box; }
    .b-line { height: 3px; flex: none; background: #cfcfcf; border-top: 1px solid #000; box-sizing: border-box; }
    .b-head { height: 26px; flex: none; display: flex; background: #161616; }
    .corner { width: 26px; flex: none; background: #222; display: flex; align-items: flex-end; justify-content: flex-end; box-sizing: border-box; padding: 3px; border-right: 1px solid #666; border-bottom: 1px solid #666; }
    .corner i { display: block; width: 18px; height: 18px; background: linear-gradient(135deg, transparent 50%, #666 50%); }
    .b-rows { flex: none; }
    .b-row { display: flex; height: 18.7px; }
    .rh {
      width: 26px;
      height: 18.7px;
      flex: none;
      box-sizing: border-box;
      background: #151515;
      border-bottom: 1px solid #555;
      border-right: 1px solid #555;
      color: #f2f2f2;
      font-size: 13px;
      font-weight: 600;
      line-height: 18px;
      text-align: center;
    }
    .b-cell { flex: 1; box-sizing: border-box; padding-left: 2px; font-size: 14px; line-height: 18px; white-space: nowrap; color: #222; background: #e6e6e6; border-bottom: 1px solid #cfcfcf; }
    .b-cell.head { background: linear-gradient(90deg, #1a6a97, #2c7aa3); color: #fff; font-weight: 700; }
    .b-cell.blue { background: #aad6ec; color: #2c4d62; border-bottom: 1px solid #63b4de; }
    .b-cell.white { background: #efefef; border-bottom: 1px solid #63b4de; }
    .b-foot { margin-left: 71px; width: 92px; height: 3px; margin-top: 3px; background: #9b9b9b; }

    /* ===== front title bar ===== */
    .title { height: 35px; flex: none; display: flex; align-items: center; font-size: 13.5px; }
    .title .lights { margin-left: 15px; }
    .auto { margin-left: 31px; width: 65px; font-weight: 500; color: #e4e4e4; }
    .toggle { width: 37px; height: 20px; border-radius: 10px; background: #161616; position: relative; }
    .toggle i { position: absolute; left: 5px; top: 3px; width: 14px; height: 14px; border-radius: 50%; background: #fff; }
    .tools { display: flex; align-items: center; margin-left: 13px; width: 518px; gap: 11.5px; color: #f0f0f0; }
    .tools .chev { margin: 0 -1px 0 -6px; }
    .docname { color: #e8e8e8; width: 57px; font-weight: 500; }
    .label { display: flex; align-items: center; gap: 5px; color: #c8c8c8; }

    /* ===== tabs ===== */
    .tabs { height: 36px; flex: none; display: flex; align-items: center; padding-left: 13px; font-size: 15px; gap: 29px; position: relative; }
    .tab { line-height: 36px; color: #e4e4e4; position: relative; font-weight: 500; }
    .tab.on { font-weight: 700; color: #f2f2f2; }
    .tab.on::after { content: ''; position: absolute; left: 0; right: 0; bottom: 1px; height: 3px; border-radius: 2px; background: #e8e8e8; }
    .tell { display: flex; align-items: center; gap: 9px; margin-left: -8px; color: #e4e4e4; font-weight: 500; }
    .comments { margin-left: auto; width: 120px; height: 28px; border-radius: 8px; background: #505050; display: flex; align-items: center; gap: 4px; padding-left: 10px; box-sizing: border-box; font-weight: 500; }
    .share { width: 60px; height: 28px; margin-right: -23px; margin-left: -18px; border-radius: 8px 0 0 8px; background: #108a44; padding-left: 11px; box-sizing: border-box; display: flex; align-items: center; color: #fff; }

    /* ===== ribbon ===== */
    .ribbon { height: 86px; flex: none; display: flex; padding-left: 10px; box-sizing: border-box; border-bottom: 1px solid #111; font-size: 12.5px; color: #ececec; font-weight: 500; }
    .slot { flex: none; display: flex; flex-direction: column; align-items: center; }
    .slot .top { height: 50px; display: flex; align-items: center; gap: 4px; flex: none; }
    .slot .text { text-align: center; line-height: 14.3px; white-space: nowrap; }
    .gap { flex: none; }
    .sep { flex: none; display: flex; justify-content: center; padding: 4px 0 8px; box-sizing: border-box; }
    .sep i { display: block; width: 1px; background: #444; }
    .stack { flex: none; display: flex; flex-direction: column; box-sizing: border-box; }
    .mini { display: flex; align-items: center; }
    .models { height: 24px; margin: 5px 0 2px; padding-left: 6px; gap: 6px; }
    .smart { width: 100px; height: 24px; padding-left: 4px; box-sizing: border-box; background: #505050; border-radius: 4px; gap: 5px; }
    .grey { color: #8a8a8a; }
    .slicer { padding: 14px 0 0 6px; gap: 19px; }
    .slicer .mini { gap: 7px; }
    .chart-grid { flex: none; display: grid; grid-template-columns: 42px 43px 42px; grid-template-rows: repeat(3, 21.7px); padding-top: 6px; box-sizing: border-box; }
    .cc { display: flex; align-items: center; gap: 6px; padding-left: 2px; }
    .cc.tall { grid-row: span 2; margin-top: -5px; }
    .small-stack { padding-top: 14px; gap: 17px; }
    .small-stack .mini { gap: 12px; }
    .eq { padding: 14px 0 0 8px; gap: 18px; }
    .eq .mini { gap: 8px; font-weight: 600; }
    .eq .sym { font-family: 'Liberation Serif', serif; font-size: 30px; font-weight: 400; width: 18px; line-height: 20px; text-align: center; }

    /* ===== formula bar ===== */
    .formula { height: 32px; flex: none; display: flex; box-sizing: border-box; }
    .name { width: 99px; flex: none; box-sizing: border-box; padding-left: 11px; font-size: 14px; font-weight: 500; display: flex; align-items: center; justify-content: space-between; padding-right: 5px; }
    .spin { display: flex; flex-direction: column; gap: 5px; }
    .spin i { display: block; width: 0; height: 0; border-left: 4px solid transparent; border-right: 4px solid transparent; }
    .spin i:first-child { border-bottom: 6px solid #bbb; }
    .spin i:last-child { border-top: 6px solid #bbb; }
    .fx { width: 112px; flex: none; display: flex; align-items: center; padding-left: 15px; gap: 15px; box-sizing: border-box; color: #666; }
    .fx span { font-family: 'Liberation Serif', serif; font-style: italic; font-size: 19px; color: #a0a0a0; }
    .input { flex: 1; margin-top: 6px; background: #3d3d3d; }
    .line { height: 3px; flex: none; background: #dedede; }

    /* ===== sheet grid ===== */
    .heads { height: 24px; flex: none; display: flex; background: #161616; }
    .heads .corner { width: 27px; background: #252525; }
    .col { width: 75.85px; flex: none; box-sizing: border-box; text-align: center; color: #ededed; font-size: 12.5px; font-weight: 600; line-height: 27px; border-right: 1px solid #555; }
    .col.sel { background: #5e5e5e; }
    .sheet { flex: 1; min-height: 0; display: flex; overflow: hidden; }
    .rows { width: 27px; flex: none; }
    .rows .rh { width: 27px; padding-top: 1.5px; }
    .rows .rh.sel { background: #5e5e5e; }
    .cells {
      flex: 1;
      position: relative;
      background-color: #fff;
      background-image:
        repeating-linear-gradient(90deg, transparent 0 74.35px, #dedede 74.35px 75.85px),
        repeating-linear-gradient(180deg, transparent 0 17.2px, #dedede 17.2px 18.7px);
    }
    .selbox { position: absolute; left: 0; top: 0; width: 75px; height: 20px; box-sizing: border-box; border: 2px solid #107c41; border-top-width: 1px; }
    .selbox::after { content: ''; position: absolute; right: -4px; bottom: -4px; width: 6px; height: 6px; background: #107c41; border: 1px solid #fff; }

    /* ===== sheet tabs + status ===== */
    .sheets { height: 30px; flex: none; background: #333; display: flex; border-bottom: 1px solid #1f1f1f; box-sizing: border-box; }
    .nav { width: 0; height: 0; border-top: 6.5px solid transparent; border-bottom: 6.5px solid transparent; margin-top: 9px; }
    .nav.l { border-right: 8px solid #555; margin-left: 17px; }
    .nav.r { border-left: 8px solid #555; margin-left: 20px; }
    .stab { margin-left: 18px; width: 92px; height: 25px; background: #fff; border-radius: 0 0 3px 3px; color: #14803f; font-size: 14px; font-weight: 600; text-align: center; line-height: 29px; }
    .plus { width: 44px; height: 25px; box-sizing: border-box; text-align: center; line-height: 29px; font-size: 20px; color: #b8b8b8; border-right: 1px solid #555; }
    .status { height: 27px; flex: none; background: #3e3e3e; display: flex; align-items: center; font-size: 14px; color: #dcdcdc; }
    .ready { margin-left: 28px; width: 66px; }
    .a11y { margin-left: 19px; margin-right: 4px; }
    .views { margin-left: auto; display: flex; align-self: stretch; }
    .view { width: 41px; display: flex; align-items: center; justify-content: center; }
    .view.on { width: 43px; background: #585858; }
    .zoom-m { width: 10px; height: 2.5px; margin-left: 10px; background: #e6e6e6; flex: none; }
    .slider { width: 116px; height: 5px; border-radius: 3px; background: #6e6e6e; margin-left: 8px; position: relative; flex: none; }
    .slider i { position: absolute; left: 49px; top: -7px; width: 19px; height: 19px; border-radius: 50%; background: #9c9c9c; }
    .zoom-p { margin: 0 8px 0 9px; font-size: 20px; font-weight: 600; width: 10px; line-height: 20px; text-align: center; color: #eee; }

    /* ===== SmartArt dropdown ===== */
    .menu {
      position: absolute;
      left: 458.5px;
      top: 126.5px;
      width: 202px;
      height: 233px;
      box-sizing: border-box;
      padding-top: 3.5px;
      background: #323232;
      border-radius: 6px;
      box-shadow: 0 2px 10px rgba(0, 0, 0, 0.55);
      z-index: 3;
    }
    .mi { height: 28px; display: flex; align-items: center; padding-left: 24px; font-size: 16px; color: #e2e2e2; }
    .mi.on { background: #8b8b8b; color: #f0f0f0; }
    .mi .ic { margin-right: 6px; }
    .mi b { margin-left: auto; margin-right: 11px; width: 0; height: 0; border-top: 6px solid transparent; border-bottom: 6px solid transparent; border-left: 11px solid #fff; }

    .gallery {
      position: absolute;
      left: 660.5px;
      top: 158.5px;
      width: 555px;
      height: 593px;
      background: #323232;
      border-top: 1px solid #111;
      border-radius: 0 0 6px 6px;
      box-shadow: 0 3px 10px rgba(0, 0, 0, 0.5);
      display: flex;
      z-index: 2;
      box-sizing: border-box;
    }
    .thumbs-wrap { width: 537px; flex: none; height: 588px; padding: 10px 0 0 6px; box-sizing: border-box; }
    .thumbs { height: 578px; overflow: hidden; display: grid; grid-template-columns: repeat(5, 96px); grid-auto-rows: 65.3px; column-gap: 11.5px; row-gap: 11.7px; }
    .thumb { background: #fff; border: 1px solid #a6a6a6; box-sizing: border-box; overflow: hidden; }
    .thumb svg { display: block; margin: -1px; }
    .track { flex: 1; border-left: 1px solid #262626; padding: 7px 3px 0 4px; background: #3a3a3a; border-radius: 0 0 6px 0; }
    .track i { display: block; height: 485px; border-radius: 5px; background: #727272; }
  `;

  private big(w: number, icon: unknown, lines: string[], withChev = false) {
    return html`<div class="slot" style="width:${w}px">
      <div class="top">${icon}${withChev ? chev() : nothing}</div>
      <div class="text">${lines.map((l) => html`<div>${l}</div>`)}</div>
    </div>`;
  }

  private sep(w: number) {
    return html`<div class="sep" style="width:${w}px"><i></i></div>`;
  }

  private renderBack() {
    const rows = Array.from({ length: 42 }, (_, i) => i + 1);
    return html`<div class="win-back">
      <div class="b-title">
        <div class="lights"><div class="light"></div><div class="light"></div><div class="light"></div></div>
        <div class="b-auto">AutoSave</div>
        <div class="b-knob"></div>
        <div class="b-tools">${home}${save}${saveAs}${undo}${chev()}${redo}${more}</div>
        <div class="b-name">${sheetDoc}<span>Spreadsheet di Ciappi</span></div>
        <div class="b-label">${shield}<span>No Label</span>${chev()}</div>
      </div>
      <div class="b-tab">Home</div>
      <div class="b-ribbon">
        <div class="b-paste">${ic(34, 32, svg`<path d="M12 29H1V5h18v4" stroke="#a8701f" stroke-width="2"/><path d="M7 6V2h7v4" stroke="#777"/><rect x="15" y="11" width="16" height="20" fill="#2b2b2b" stroke="#8a8a8a" stroke-width="1.3"/>`)}</div>
        <div class="b-paste-l">Paste</div>
      </div>
      <div class="b-formula">A1</div>
      <div class="b-line"></div>
      <div class="b-head"><div class="corner"><i></i></div></div>
      <div class="b-rows">
        ${rows.map((n) => {
          const t = BACK_CELLS[n - 1];
          const cls = n === 1 ? 'head' : n > 14 ? '' : n % 2 === 0 ? 'blue' : 'white';
          return html`<div class="b-row"><div class="rh">${n}</div><div class="b-cell ${cls}">${t ?? ''}</div></div>`;
        })}
      </div>
      <div class="b-foot"></div>
    </div>`;
  }

  private renderTitle() {
    return html`<div class="title">
      <div class="lights"><div class="light"></div><div class="light"></div><div class="light"></div></div>
      <div class="auto">AutoSave</div>
      <div class="toggle"><i></i></div>
      <div class="tools">${home}${save}${saveAs}${undo}${chev()}${redo}${more}</div>
      <div class="docname">Book3</div>
      <div class="label">${shield}<span>No Label</span></div>
    </div>`;
  }

  private renderTabs() {
    return html`<div class="tabs">
      ${TABS.map((t) => html`<div class="tab ${t === 'Insert' ? 'on' : ''}">${t}</div>`)}
      <div class="tell">
        ${ic(17, 22, svg`<path d="M5.5 15.5c0-3-4-4.500-4-8.500a7 7 0 0 1 14 0c0 4-4 5.500-4 8.500zM6 18h5M7 20.500h3" stroke="#d0d0d0" stroke-width="1.2"/>`)}
        <span>Tell me</span>
      </div>
      <div class="comments">
        ${ic(20, 19, svg`<path d="M3 1.500h14q2 0 2 2v9q0 2-2 2H9l-4 3.500v-3.500H3q-2 0-2-2v-9q0-2 2-2z" stroke="#e6e6e6" stroke-width="1.2"/>`)}
        <span>Comments</span>
      </div>
      <div class="share">
        ${ic(19, 19, svg`<path d="M9 3H3q-2 0-2 2v11q0 2 2 2h11q2 0 2-2v-4" stroke-width="1.4"/><path d="M6 13q0-6 6-6V3l6 6-6 5.500V10.500q-4 0-6 2.500z" stroke-width="1.4"/>`)}
      </div>
    </div>`;
  }

  private renderRibbon() {
    return html`<div class="ribbon">
      ${this.big(44, pivotTable, ['Pivot', 'Table'])}
      ${this.big(96, recPivot, ['Recommended', 'Pivot Tables'])}
      ${this.big(44, tableIc, ['Table'])}
      ${this.sep(24)}
      ${this.big(54, fromPic, ['From', 'Picture'], true)}
      ${this.sep(29)}
      ${this.big(50, pictures, ['Pictures'], true)}
      <div class="gap" style="width:4px"></div>
      ${this.big(58, shapes, ['Shapes'], true)}
      ${this.big(44, iconsIc, ['Icons'])}
      <div class="stack" style="width:120px;padding-left:3px">
        <div class="mini models">${cube}<span>3D Models</span>${chev()}</div>
        <div class="mini smart">${smart}<span>SmartArt</span>${chev()}</div>
      </div>
      ${this.sep(17)}
      ${this.big(100, recChart, ['Recommended', 'Charts'], true)}
      <div class="chart-grid" style="width:128px">
        <div class="cc">${cBars}${chev()}</div>
        <div class="cc">${cStack}${chev()}</div>
        <div class="cc tall">${cWaterfall}${chev()}</div>
        <div class="cc">${cLine}${chev()}</div>
        <div class="cc">${cColumn}${chev()}</div>
        <div class="cc">${cPie}${chev()}</div>
        <div class="cc">${cScatter}${chev()}</div>
        <div class="cc">${cHier}${chev()}</div>
      </div>
      ${this.big(55, globe, ['Maps'], true)}
      ${this.big(47, pivotChart, ['Pivot', 'Chart'])}
      ${this.sep(21)}
      ${this.big(69, spark, ['Sparklines'], true)}
      ${this.sep(21)}
      <div class="stack slicer grey" style="width:92px">
        <div class="mini">${slicer}<span>Slicer</span></div>
        <div class="mini">${timeline}<span>Timeline</span></div>
      </div>
      ${this.sep(19)}
      ${this.big(44, link, ['Link'])}
      ${this.sep(26)}
      ${this.big(58, newComment, ['New', 'Comment'])}
      ${this.sep(31)}
      ${this.big(33, textBox, ['Text', 'Box'])}
      ${this.big(74, headFoot, ['Header &', 'Footer'])}
      <div class="stack small-stack" style="width:40px">
        <div class="mini">${wordArt}${chev()}</div>
        <div class="mini">${objBox}</div>
      </div>
      ${this.sep(21)}
      <div class="stack eq" style="width:64px">
        <div class="mini"><span class="sym">π</span><span>Equation</span></div>
        <div class="mini grey"><span class="sym">Ω</span><span>Symbol</span></div>
      </div>
    </div>`;
  }

  private renderStatus() {
    return html`<div class="sheets">
        <div class="nav l"></div>
        <div class="nav r"></div>
        <div class="stab">Sheet1</div>
        <div class="plus">+</div>
      </div>
      <div class="status">
        <div class="ready">Ready</div>
        ${ic(18, 18, svg`<circle cx="3.5" cy="3.5" r="2.5" fill="currentColor" stroke="none"/><path d="M3.5 7v9h8M7 2.500h10M14 2.500v10q0 3-3 3" stroke-width="1.5"/>`)}
        <div class="a11y">${ic(18, 20, svg`<circle cx="6" cy="3" r="2"/><path d="M1 4l4 3h2l4-3M4 7l1 6-3 5M8 7l-1 6 1 5M9 14l3 4 5-6" stroke-width="1.3"/>`)}</div>
        <span>Accessibility: Good to go</span>
        <div class="views">
          <div class="view on">${ic(16, 16, svg`<path d="M1 1h14v14H1zM1 5.700h14M1 10.300h14M5.700 1v14M10.300 1v14" stroke-width="1.2"/>`)}</div>
          <div class="view">${ic(17, 16, svg`<rect x="1" y="1" width="15" height="14" rx="1" stroke-width="1.3"/><rect x="4.5" y="3.5" width="8" height="9" fill="#777" stroke-width=".8"/><path d="M6 6h5M6 8h5M6 10h5" stroke-width=".8"/>`)}</div>
          <div class="view">${ic(17, 16, svg`<path d="M1 1h15v14H1zM1 10h10V1M6 1v9" stroke-width="1.3"/>`)}</div>
        </div>
        <div class="zoom-m"></div>
        <div class="slider"><i></i></div>
        <div class="zoom-p">+</div>
      </div>`;
  }

  render() {
    const rows = Array.from({ length: 38 }, (_, i) => i + 1);
    return html`
      ${this.renderBack()}
      <div class="shell">
        <div class="win-front">
          ${this.renderTitle()}
          ${this.renderTabs()}
          ${this.renderRibbon()}
          <div class="formula">
            <div class="name"><span>A1</span><div class="spin"><i></i><i></i></div></div>
            <div class="fx">
              ${ic(20, 14, svg`<path d="M5 2l10 10M15 2 5 12" stroke-width="2.4"/>`)}
              ${ic(20, 14, svg`<path d="M2 7l5 5L18 2" stroke-width="2.4"/>`)}
              <span>fx</span>
            </div>
            <div class="input"></div>
          </div>
          <div class="line"></div>
          <div class="heads">
            <div class="corner"><i></i></div>
            ${COLS.map((x, i) => html`<div class="col ${i === 0 ? 'sel' : ''}">${x}</div>`)}
          </div>
          <div class="sheet">
            <div class="rows">${rows.map((n) => html`<div class="rh ${n === 1 ? 'sel' : ''}">${n}</div>`)}</div>
            <div class="cells"><div class="selbox"></div></div>
          </div>
          ${this.renderStatus()}
        </div>
        <div class="gallery">
          <div class="thumbs-wrap">
            <div class="thumbs">
              ${THUMBS.map((t) => html`<div class="thumb"><svg width="96" height="65" viewBox="0 0 96 65" fill="none">${t}</svg></div>`)}
            </div>
          </div>
          <div class="track"><i></i></div>
        </div>
        <div class="menu">
          ${MENU.map((m) => html`<div class="mi ${m === 'Process' ? 'on' : ''}">${M_ICONS[m]}<span>${m}</span><b></b></div>`)}
        </div>
      </div>
    `;
  }
}
